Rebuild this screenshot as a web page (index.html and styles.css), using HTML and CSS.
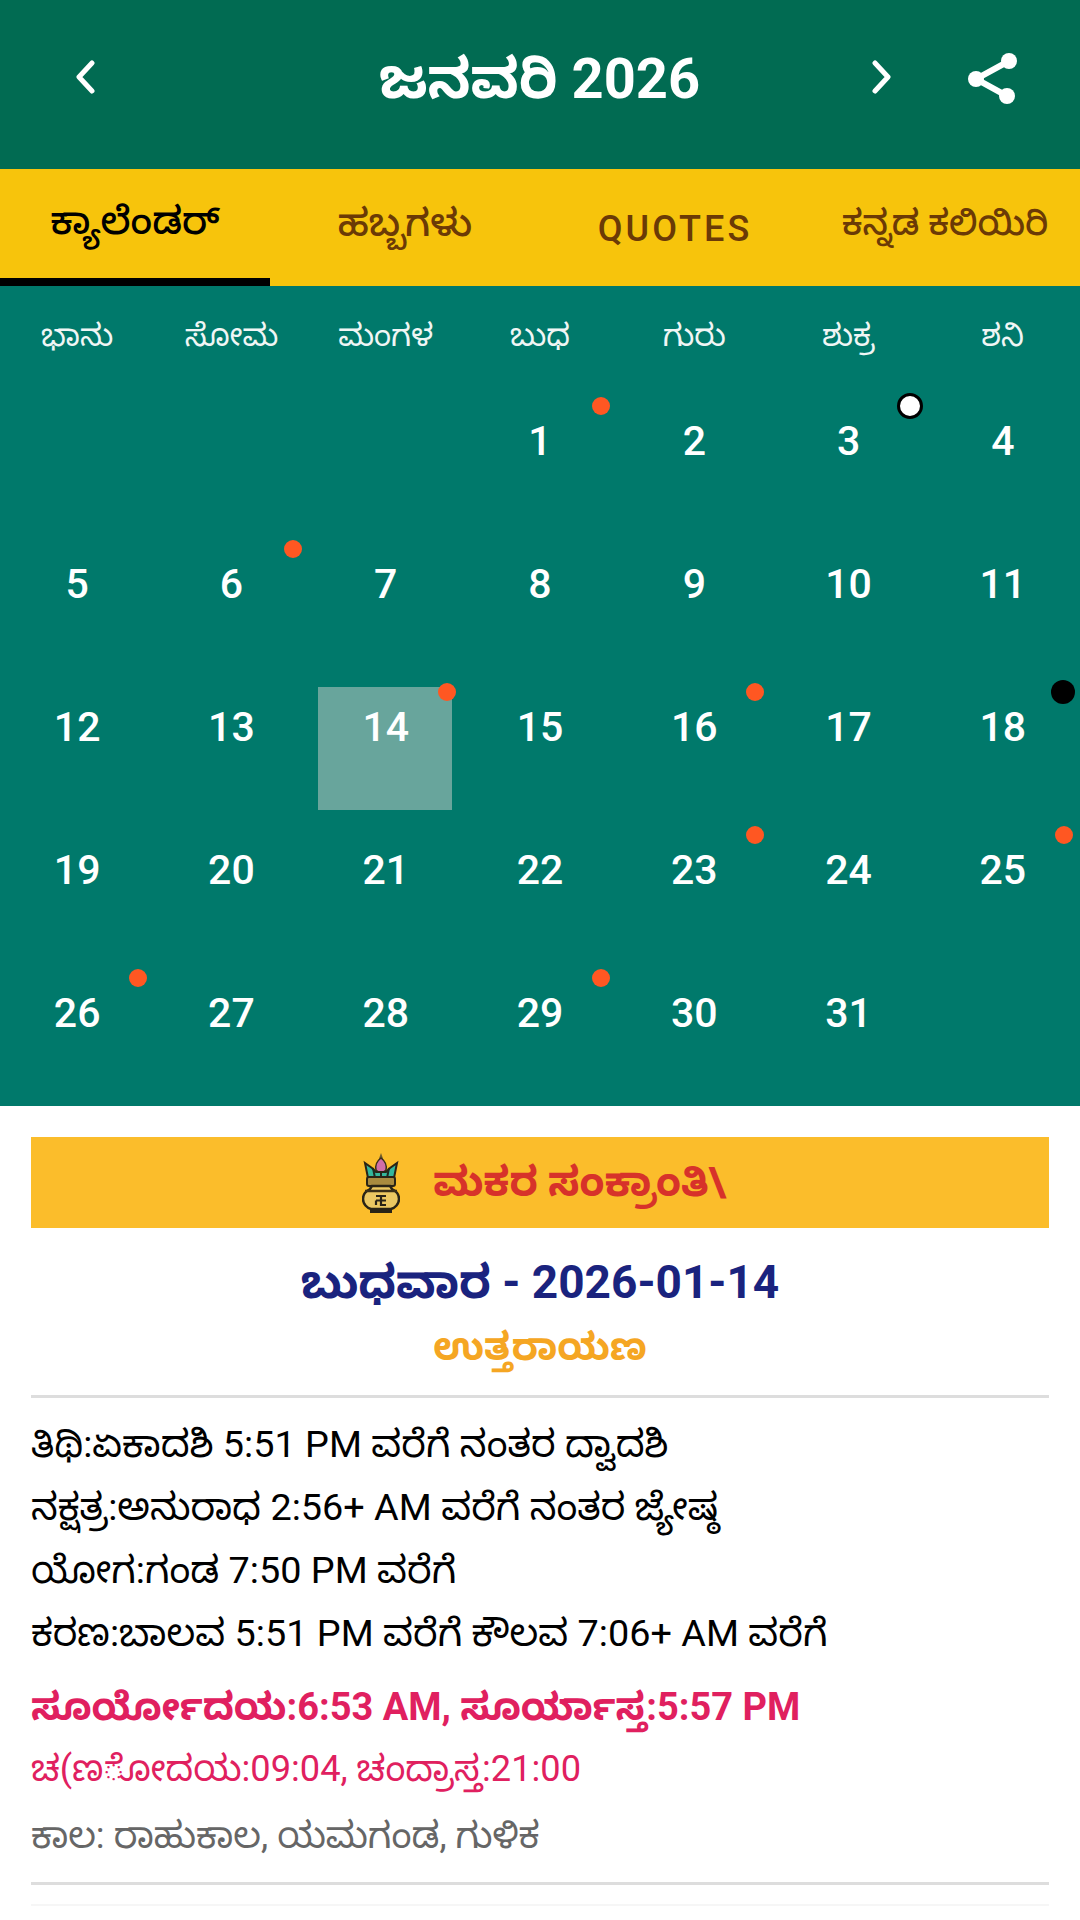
FILE: index.html
```html
<!DOCTYPE html>
<html lang="kn">
<head>
<meta charset="utf-8">
<title>ಜನವರಿ 2026</title>
<link rel="stylesheet" href="styles.css">
</head>
<body>
<header class="topbar">
  <div class="bar-side">
    <svg class="chev" viewBox="0 0 20 34" width="20" height="34"><path d="M16 3 3 17l13 14" /></svg>
  </div>
  <h1 class="month">ಜನವರಿ 2026</h1>
  <div class="bar-side bar-right">
    <svg class="chev" viewBox="0 0 20 34" width="20" height="34"><path d="M4 3l13 14L4 31" /></svg>
    <svg class="share" viewBox="0 0 52 52" width="52" height="52"><circle cx="42" cy="9" r="8"/><circle cx="9" cy="27" r="8"/><circle cx="40" cy="44" r="8"/><path d="M42 9 9 27l31 17"/></svg>
  </div>
</header>
<nav class="tabs">
  <div class="tab tab-active">ಕ್ಯಾಲೆಂಡರ್</div>
  <div class="tab">ಹಬ್ಬಗಳು</div>
  <div class="tab tab-latin">QUOTES</div>
  <div class="tab tab-small">ಕನ್ನಡ ಕಲಿಯಿರಿ</div>
</nav>
<section class="calendar">
  <div class="weekdays">
    <span>ಭಾನು</span><span>ಸೋಮ</span><span>ಮಂಗಳ</span><span>ಬುಧ</span><span>ಗುರು</span><span>ಶುಕ್ರ</span><span>ಶನಿ</span>
  </div>
  <div class="grid">
    <div class="day"></div><div class="day"></div><div class="day"></div>
    <div class="day">1<i class="dot"></i></div><div class="day">2</div><div class="day">3<i class="dot dot-white"></i></div><div class="day">4</div>
    <div class="day">5</div><div class="day">6<i class="dot"></i></div><div class="day">7</div><div class="day">8</div><div class="day">9</div><div class="day">10</div><div class="day">11</div>
    <div class="day">12</div><div class="day">13</div><div class="day selected"><span class="num">14</span><i class="dot"></i></div><div class="day">15</div><div class="day">16<i class="dot"></i></div><div class="day">17</div><div class="day">18<i class="dot dot-black"></i></div>
    <div class="day">19</div><div class="day">20</div><div class="day">21</div><div class="day">22</div><div class="day">23<i class="dot"></i></div><div class="day">24</div><div class="day">25<i class="dot"></i></div>
    <div class="day">26<i class="dot"></i></div><div class="day">27</div><div class="day">28</div><div class="day">29<i class="dot"></i></div><div class="day">30</div><div class="day">31</div><div class="day"></div>
  </div>
</section>
<main class="details">
  <div class="festival">
    <svg class="kalash" viewBox="0 0 38 60" width="38" height="60">
      <path d="M19 0l2.5 7h-5z" fill="#6d5a2c"/>
      <path d="M19 5c4 3 6 7 5 12l-5 4-5-4c-1-5 1-9 5-12z" fill="#d06ea8" stroke="#3a2f18" stroke-width="1.5"/>
      <path d="M3 10l7 5 4 4h10l4-4 7-5-3 15H6z" fill="#35b79c" stroke="#2a2416" stroke-width="2"/>
      <path d="M11 15l2 10M19 20v5M27 15l-2 10" stroke="#1e2a20" stroke-width="2"/>
      <rect x="5" y="24" width="28" height="9" rx="2" fill="#a98b3f" stroke="#2a2416" stroke-width="2"/>
      <path d="M10 33h18l2 3c4 2 7 6 7 10 0 5-4 9-8 10H9c-4-1-8-5-8-10 0-4 3-8 7-10z" fill="#ecc862" stroke="#2a2416" stroke-width="2.5"/>
      <path d="M3 38h32" stroke="#3a2f18" stroke-width="2.5"/>
      <path d="M14 43h5v9h5M24 43h-5M14 47.500h10M14 52v-4.500" fill="none" stroke="#2a2416" stroke-width="2.200"/>
      <path d="M8 58.500h22" stroke="#2a2416" stroke-width="3"/>
    </svg>
    <span class="fest-name">ಮಕರ ಸಂಕ್ರಾಂತಿ\</span>
  </div>
  <h2 class="date">ಬುಧವಾರ - 2026-01-14</h2>
  <div class="ayana">ಉತ್ತರಾಯಣ</div>
  <div class="panchang">
    <p>ತಿಥಿ:ಏಕಾದಶಿ 5:51 PM ವರೆಗೆ ನಂತರ ದ್ವಾದಶಿ</p>
    <p>ನಕ್ಷತ್ರ:ಅನುರಾಧ 2:56+ AM ವರೆಗೆ ನಂತರ ಜ್ಯೇಷ್ಠ</p>
    <p>ಯೋಗ:ಗಂಡ 7:50 PM ವರೆಗೆ</p>
    <p>ಕರಣ:ಬಾಲವ 5:51 PM ವರೆಗೆ ಕೌಲವ 7:06+ AM ವರೆಗೆ</p>
  </div>
  <div class="sun">ಸೂರ್ಯೋದಯ:6:53 AM, ಸೂರ್ಯಾಸ್ತ:5:57 PM</div>
  <div class="moon">ಚ(ಣ◌ೋದಯ:09:04, ಚಂದ್ರಾಸ್ತ:21:00</div>
  <div class="kala">ಕಾಲ: ರಾಹುಕಾಲ, ಯಮಗಂಡ, ಗುಳಿಕ</div>
  <div class="rule-last"></div>
  <div class="rule-faint"></div>
</main>
</body>
</html>
```
FILE: styles.css
```css
* { box-sizing: border-box; }
html, body { margin: 0; padding: 0; }
body { width: 1080px; height: 1920px; overflow: hidden; background: #fff; font-family: Roboto, "Noto Sans", "Noto Sans Kannada", "DejaVu Sans", sans-serif; color: #000; }
.topbar { height: 169px; background: #016b52; display: grid; grid-template-columns: 1fr auto 1fr; align-items: start; padding: 60px 61px 0 76px; }
.bar-side { display: flex; align-items: flex-start; }
.bar-right { justify-content: flex-end; }
.chev { fill: none; stroke: #fff; stroke-width: 5; stroke-linecap: round; stroke-linejoin: round; flex: none; }
.month { margin: -14px 0 0; position: relative; left: -8px; color: #fff; font-size: 56px; line-height: 66px; font-weight: 700; white-space: nowrap; }
.share { fill: #fff; margin-left: 76px; margin-top: -8px; flex: none; }
.share path { fill: none; stroke: #fff; stroke-width: 6; }
.tabs { height: 117px; background: #f7c40c; display: grid; grid-template-columns: repeat(4, 270px); }
.tab { display: flex; align-items: center; justify-content: center; color: #6b3a06; font-size: 38px; font-weight: 500; padding-top: 2px; white-space: nowrap; }
.tab-active { color: #000; border-bottom: 8px solid #000; padding-top: 6px; }
.tab-latin { letter-spacing: 3px; font-size: 36px; }
.tab-small { font-size: 35px; }
.calendar { height: 820px; background: #00796b; color: #fff; }
.weekdays { height: 111px; padding-bottom: 4px; display: grid; grid-template-columns: repeat(7, 1fr); align-items: center; text-align: center; font-size: 31px; color: #f0f6f5; }
.grid { display: grid; grid-template-columns: repeat(7, 1fr); grid-auto-rows: 143px; }
.day { position: relative; padding-top: 21px; text-align: center; font-size: 41px; line-height: 47px; font-weight: 500; }
.selected::before { content: ""; position: absolute; left: 9px; width: 134px; top: 4px; height: 123px; background: #68a59c; }
.num { position: relative; }
.dot { position: absolute; top: 0; right: 7px; width: 18px; height: 18px; border-radius: 50%; background: #ff5722; }
.dot-white { width: 26px; height: 26px; top: -4px; right: 3px; background: #fff; border: 3px solid #000; }
.dot-black { width: 24px; height: 24px; top: -3px; right: 5px; background: #000; }
.details { padding: 31px 31px 0; }
.festival { height: 91px; padding-left: 8px; background: #fbbd2b; color: #d7322a; display: flex; align-items: center; justify-content: center; gap: 33px; font-size: 41px; font-weight: 700; }
.fest-name { position: relative; top: 5px; }
.kalash { flex: none; }
.date { margin: 20px 0 0; text-align: center; color: #1a237e; font-size: 46px; line-height: 68px; font-weight: 700; }
.ayana { text-align: center; color: #f5a623; font-size: 38px; line-height: 62px; font-weight: 700; padding-bottom: 17px; border-bottom: 3px solid #ddd; margin-bottom: 15px; }
.panchang p { margin: 0; font-size: 37.800px; line-height: 63px; }
.sun { margin-top: 9px; color: #e0205f; font-size: 38px; font-weight: 700; line-height: 66px; }
.moon { margin-top: -2px; color: #e0205f; font-size: 36.200px; line-height: 62px; }
.kala { margin-top: 5px; color: #666; font-size: 36.400px; line-height: 62px; }
.rule-last { margin-top: 15px; border-bottom: 3px solid #ddd; }
.rule-faint { margin-top: 19px; border-bottom: 2px solid #f6f6f6; }
```
